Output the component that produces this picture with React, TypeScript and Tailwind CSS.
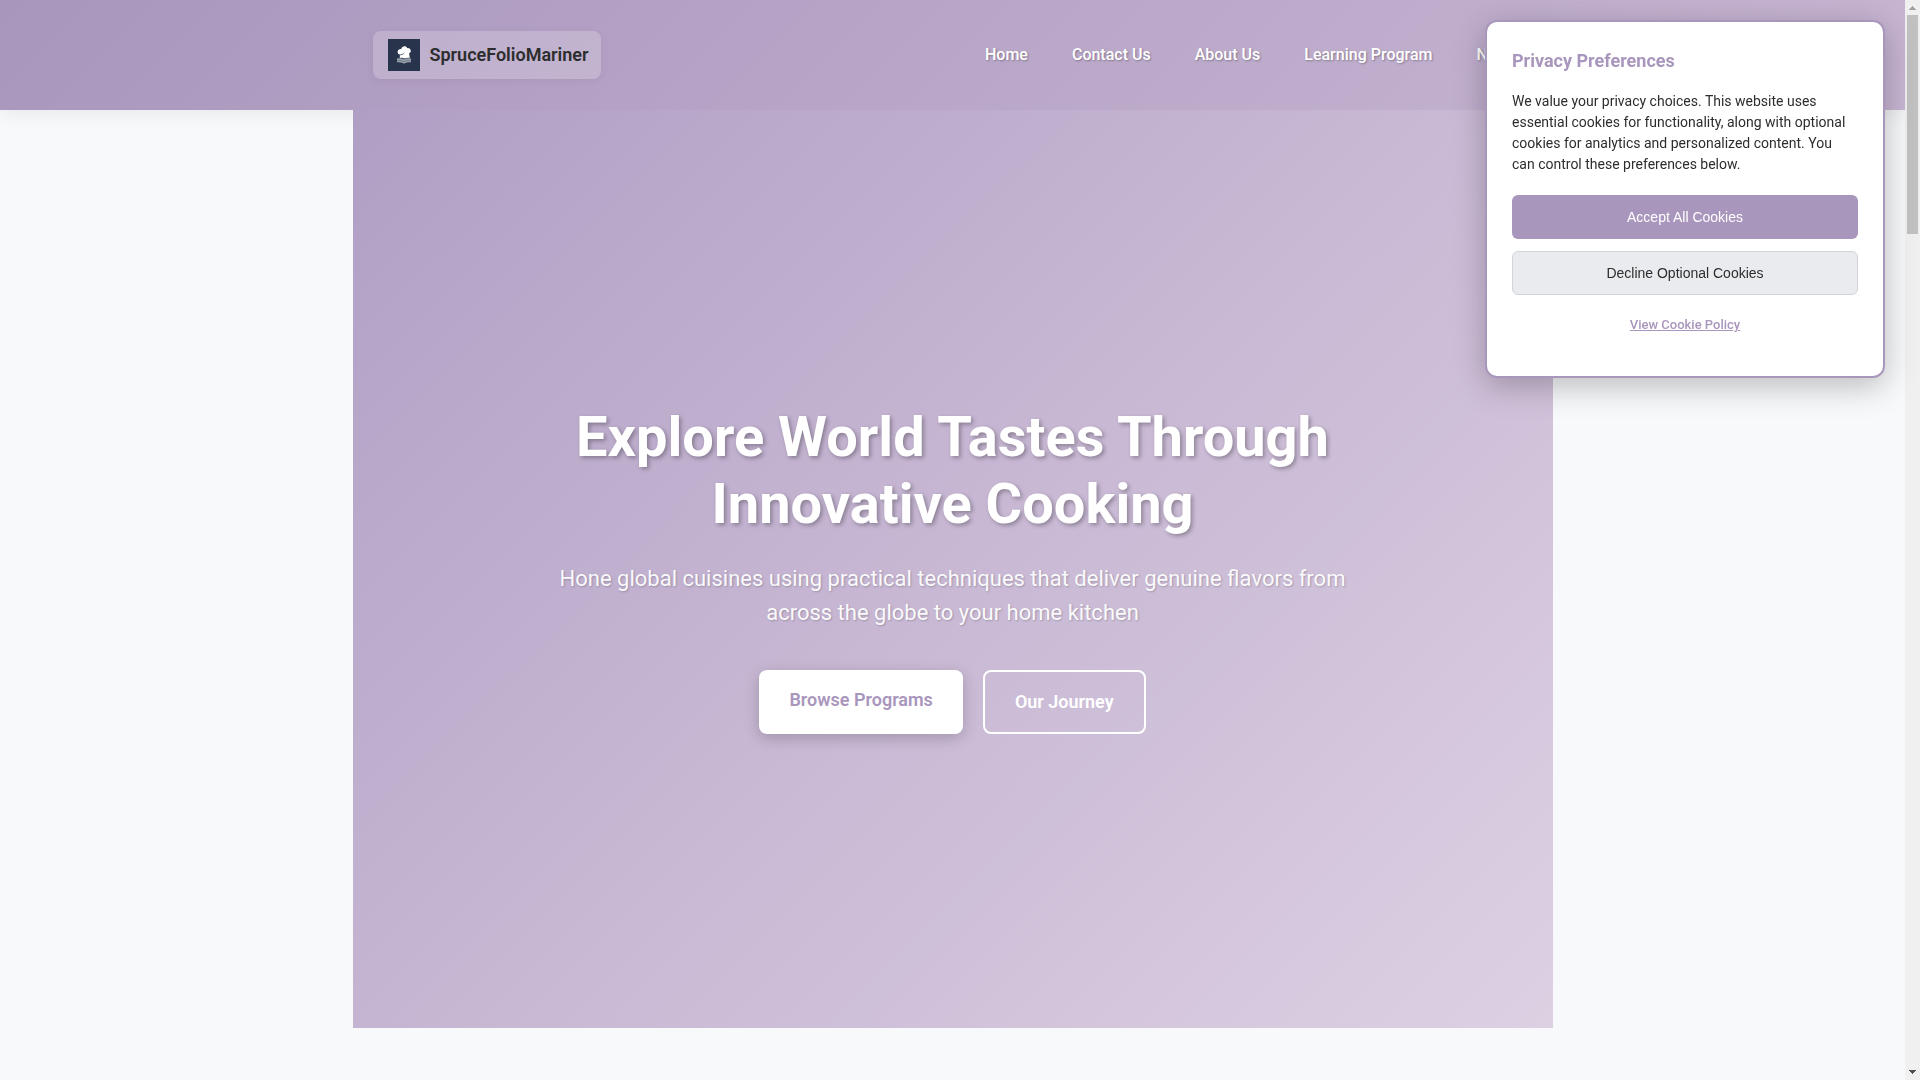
import React from "react";

const navItems = ["Home", "Contact Us", "About Us", "Learning Program", "News"];

function Logo() {
  return (
    <svg viewBox="0 0 32 32" className="h-8 w-8 shrink-0" aria-hidden="true">
      <rect width="32" height="32" fill="#27344c" />
      <path
        d="M9 19.600c2.600-.6 5-.3 7 .9 2-1.200 4.400-1.500 7-.9v3.600c-2.500-.2-4.400 0-5.700.7L16 24.800l-1.300-.9c-1.300-.7-3.200-.9-5.700-.7z"
        fill="#98a1ab"
      />
      <path d="M9.500 21.600c2.500-.3 4.500 0 6.500 1.200 2-1.200 4-1.500 6.500-1.200" stroke="#5d6878" strokeWidth="0.6" fill="none" />
      <path
        d="M11.800 15.600c-2.300-.4-2.900-3.700-1.100-4.900.8-.6 1.800-.7 2.500-.5.600-3.400 5-3.700 5.900-1.200 2-.3 3.800 1.100 3.700 3-.1 1.400-.8 2-1.700 2.300l.7 4.600c-1.600-.3-3.700-.2-5.400.7-1.200-.8-2.900-.9-4.600-.6z"
        fill="#fff"
      />
      <path d="M11.500 15.800c1.900.2 3.600-.4 4.800-1.900" stroke="#27344c" strokeWidth="0.7" fill="none" />
    </svg>
  );
}

function Header() {
  return (
    <header className="bg-linear-135 from-[#a996bd] to-[#c8b6d3] shadow-[0_2px_20px_rgba(0,0,0,0.08)]">
      <div className="mx-auto flex h-[110px] max-w-[1200px] items-center justify-between px-5">
        <a
          href="#"
          className="flex items-center gap-2.5 rounded-lg bg-white/20 py-2 pr-[13px] pl-[15px] shadow-[0_2px_10px_rgba(0,0,0,0.05)]"
        >
          <Logo />
          <span className="text-lg leading-8 font-semibold text-[#2d2d2d]">SpruceFolioMariner</span>
        </a>
        <nav className="flex gap-3">
          {navItems.map((item) => (
            <a
              key={item}
              href="#"
              className="px-4 py-2 text-base font-medium whitespace-nowrap text-white [text-shadow:1px_1px_2px_rgba(0,0,0,0.3)]"
            >
              {item}
            </a>
          ))}
        </nav>
      </div>
    </header>
  );
}

function Hero() {
  return (
    <section className="relative mx-auto flex min-h-[85vh] max-w-[1200px] items-center justify-center bg-linear-135 from-[#b09fc4] via-[#c8b8d4] to-[#ddd0e3] px-5">
      <div className="flex max-w-[800px] flex-col items-center text-center text-white">
        <h1 className="text-[56px] leading-[67px] font-bold [text-shadow:2px_2px_4px_rgba(0,0,0,0.3)]">
          Explore World Tastes Through Innovative Cooking
        </h1>
        <p className="mt-6 text-[22px] leading-[34px] text-white/95 [text-shadow:1px_1px_2px_rgba(0,0,0,0.2)]">
          Hone global cuisines using practical techniques that deliver genuine flavors from across the globe to your
          home kitchen
        </p>
        <div className="mt-10 flex gap-5">
          <a
            href="#"
            className="rounded-lg bg-white px-[30px] py-4 text-lg leading-7 font-semibold text-[#a996bd] shadow-[0_4px_15px_rgba(0,0,0,0.2)]"
          >
            Browse Programs
          </a>
          <a href="#" className="rounded-lg border-2 border-white px-[30px] py-4 text-lg leading-7 font-semibold">
            Our Journey
          </a>
        </div>
      </div>
    </section>
  );
}

function CookieNotice() {
  return (
    <div
      role="dialog"
      aria-labelledby="cookie-title"
      className="fixed top-5 right-[35px] z-20 w-[400px] rounded-xl border-2 border-[#a996bd] bg-white px-[25px] pt-[25px] pb-[41px] text-[#2d2d2d] shadow-[0_8px_32px_rgba(0,0,0,0.25)]"
    >
      <h3 id="cookie-title" className="text-lg leading-7 font-bold text-[#a996bd]">
        Privacy Preferences
      </h3>
      <p className="mt-4 text-sm leading-[21px]">
        We value your privacy choices. This website uses essential cookies for functionality, along with optional
        cookies for analytics and personalized content. You can control these preferences below.
      </p>
      <div className="mt-5 flex flex-col gap-3 font-['Liberation_Sans',sans-serif]">
        <button className="h-11 rounded-md bg-[#a996bd] text-sm text-white">Accept All Cookies</button>
        <button className="h-11 rounded-md border border-[#d1d5db] bg-[#e9ebef] text-sm">
          Decline Optional Cookies
        </button>
      </div>
      <div className="mt-5 flex justify-center">
        <a href="#" className="text-[13px] leading-5 font-medium text-[#a996bd] underline">
          View Cookie Policy
        </a>
      </div>
    </div>
  );
}

function Scrollbar() {
  return (
    <div className="flex h-screen w-[15px] shrink-0 flex-col items-center bg-[#f0f0f0]" aria-hidden="true">
      <svg viewBox="0 0 15 15" className="h-[15px] w-[15px] shrink-0">
        <path d="M7 6h1v1h1v1h1v1h1v1H4V9h1V8h1V7h1z" fill="#a3a3a3" />
      </svg>
      <div className="h-[219px] w-[11px] bg-[#c1c1c1]" />
      <svg viewBox="0 0 15 15" className="mt-auto h-[15px] w-[15px] shrink-0">
        <path d="M4 5h7v1h-1v1H9v1H8v1H7V8H6V7H5V6H4z" fill="#505050" />
      </svg>
    </div>
  );
}

export default function App() {
  return (
    <div className="flex h-screen overflow-hidden bg-[#f8f9fb] font-[Roboto,sans-serif]">
      <main className="min-w-0 flex-1">
        <Header />
        <Hero />
      </main>
      <Scrollbar />
      <CookieNotice />
    </div>
  );
}
